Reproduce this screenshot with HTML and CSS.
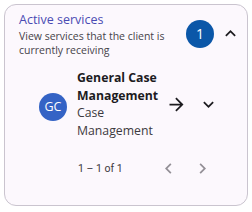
FILE: index.html
```html
<!DOCTYPE html>
<html>
<head>
<meta charset="utf-8">
<link rel="stylesheet" href="styles.css">
</head>
<body>
<div class="card">
  <div class="header">
    <div class="head-text">
      <div class="title">Active services</div>
      <div class="subtitle">View services that the client is currently receiving</div>
    </div>
    <div class="badge">1</div>
    <svg class="icon chev-up" width="21" height="21" viewBox="0 0 24 24"><path d="M7.4 15.4 12 10.8l4.6 4.6L18 14l-6-6-6 6z" fill="#1c1b1f"/></svg>
  </div>
  <div class="item">
    <div class="avatar">GC</div>
    <div class="item-text">
      <div class="item-title">General Case Management</div>
      <div class="item-sub">Case Management</div>
    </div>
    <svg class="icon arrow" width="21" height="21" viewBox="0 0 24 24"><path d="M12 4l-1.4 1.4 5.6 5.6H4v2h12.2l-5.6 5.6L12 20l8-8z" fill="#1c1b1f"/></svg>
    <svg class="icon chev-down" width="21" height="21" viewBox="0 0 24 24"><path d="M7.4 8.6 12 13.2l4.6-4.6L18 10l-6 6-6-6z" fill="#1c1b1f"/></svg>
  </div>
  <div class="pager">
    <span class="range">1 – 1 of 1</span>
    <svg class="icon pg-prev" width="21" height="21" viewBox="0 0 24 24"><path d="M15.4 7.4 14 6l-6 6 6 6 1.4-1.4L10.8 12z" fill="#938f96"/></svg>
    <svg class="icon pg-next" width="21" height="21" viewBox="0 0 24 24"><path d="M8.6 7.4 10 6l6 6-6 6-1.4-1.4L13.2 12z" fill="#938f96"/></svg>
  </div>
</div>
</body>
</html>
```
FILE: styles.css
```css
html, body { margin: 0; padding: 0; background: #ffffff; }
body { font-family: "Open Sans", "Noto Sans", sans-serif; }
.card {
  margin: 4px;
  width: 244px;
  height: 202px;
  box-sizing: border-box;
  border: 1px solid #cac4cf;
  border-radius: 12px;
  background: #fcf8fd;
  display: flex;
  flex-direction: column;
}
.icon { display: block; flex: none; }
.header {
  display: flex;
  align-items: center;
  padding: 6px 6px 0 14px;
}
.head-text { flex: 1; }
.title { font-size: 12.5px; line-height: 17.5px; color: #4a4bb3; }
.subtitle { font-size: 10.5px; line-height: 14px; color: #46434a; }
.badge {
  width: 28px; height: 28px; border-radius: 50%;
  background: #0b57a8; color: #fff;
  display: flex; align-items: center; justify-content: center;
  font-size: 14px; font-weight: 500;
  margin-right: 6px;
  flex: none;
}
.item {
  display: flex;
  align-items: center;
  padding: 12.75px 0 0 34px;
}
.avatar {
  width: 28px; height: 28px; border-radius: 50%;
  background: #3463c5; color: #fff;
  display: flex; align-items: center; justify-content: center;
  font-size: 12.5px; margin: 4.5px 10px 0 0;
  flex: none;
}
.item-text { width: 84px; font-size: 12.25px; line-height: 17.5px; }
.item-title { font-weight: 700; color: #1c1b1f; }
.item-sub { color: #3d3a40; }
.arrow { margin-left: 5px; }
.chev-down { margin-left: 11px; }
.pager {
  display: flex;
  align-items: center;
  padding: 19px 0 0 73px;
}
.range { font-family: Roboto, sans-serif; font-size: 10.5px; color: #3d3a40; width: 80px; }
.pg-next { margin-left: 13px; }
```
